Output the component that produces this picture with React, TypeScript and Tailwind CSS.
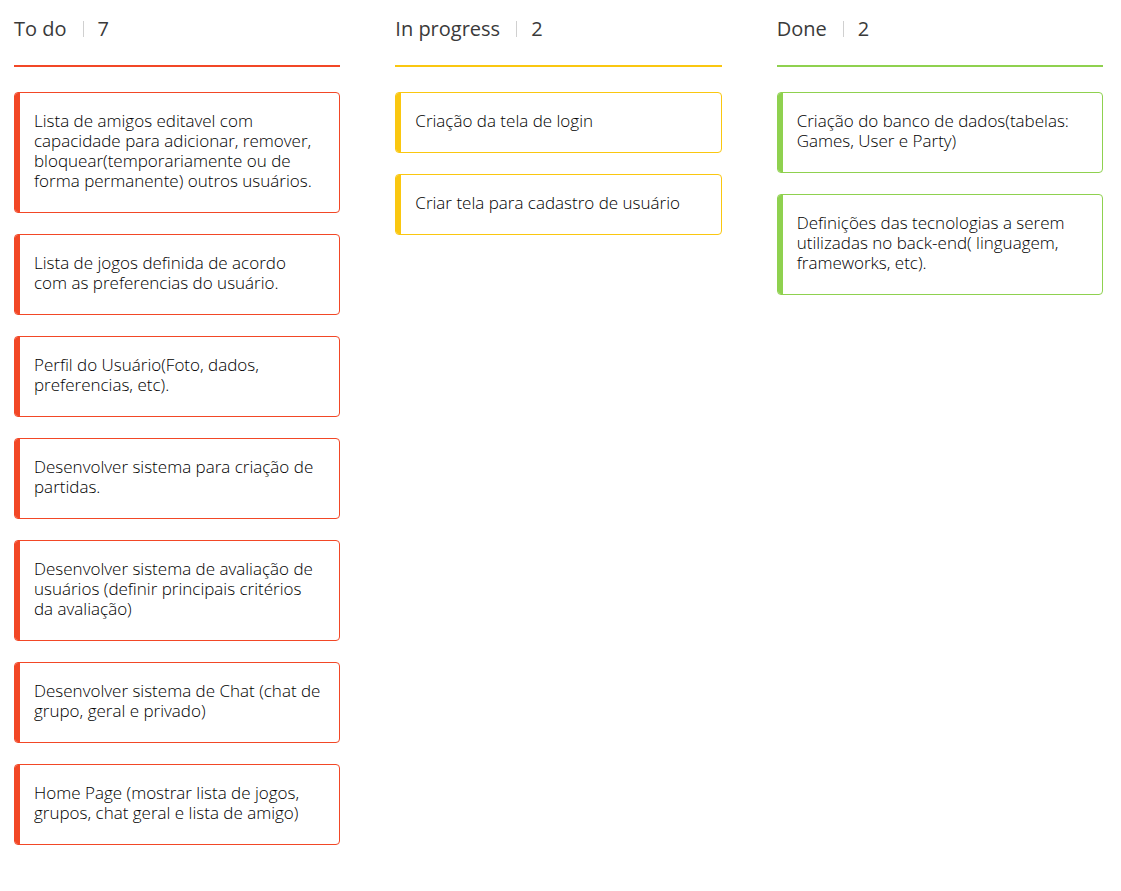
type Column = {
  title: string;
  line: string;
  card: string;
  bar: string;
  tasks: string[];
};

const columns: Column[] = [
  {
    title: "To do",
    line: "bg-[#f24726]",
    card: "border-[#f24726]",
    bar: "bg-[#f24726]",
    tasks: [
      "Lista de amigos editavel com capacidade para adicionar, remover, bloquear(temporariamente ou de forma permanente) outros usuários.",
      "Lista de jogos definida de acordo com as preferencias do usuário.",
      "Perfil do Usuário(Foto, dados, preferencias, etc).",
      "Desenvolver sistema para criação de partidas.",
      "Desenvolver sistema de avaliação de usuários (definir principais critérios da avaliação)",
      "Desenvolver sistema de Chat (chat de grupo, geral e privado)",
      "Home Page (mostrar lista de jogos, grupos, chat geral e lista de amigo)",
    ],
  },
  {
    title: "In progress",
    line: "bg-[#fac710]",
    card: "border-[#fac710]",
    bar: "bg-[#fac710]",
    tasks: ["Criação da tela de login", "Criar tela para cadastro de usuário"],
  },
  {
    title: "Done",
    line: "bg-[#8fd14f]",
    card: "border-[#8fd14f]",
    bar: "bg-[#8fd14f]",
    tasks: [
      "Criação do banco de dados(tabelas: Games, User e Party)",
      "Definições das tecnologias a serem utilizadas no back-end( linguagem, frameworks, etc).",
    ],
  },
];

export default function App() {
  return (
    <main className="grid min-h-screen grid-cols-3 content-start gap-[55px] bg-white pt-4 pr-[18px] pb-11 pl-[14px] font-['Open_Sans',sans-serif]">
      {columns.map((column) => (
        <section key={column.title}>
          <header className="flex h-[25px] items-center text-xl text-[#3a3a3a]">
            <h2>{column.title}</h2>
            <span className="mr-[14px] ml-4 h-4 w-px bg-[#d0d0d0]" />
            <span>{column.tasks.length}</span>
          </header>
          <div className={`mt-6 h-[2px] ${column.line}`} />
          <ul className="mt-[25px] flex flex-col gap-[21px]">
            {column.tasks.map((task) => (
              <li
                key={task}
                className={`flex overflow-hidden rounded-[4px] border ${column.card}`}
              >
                <span className={`w-[5px] shrink-0 ${column.bar}`} />
                <p className="pt-[18px] pr-[18px] pb-[21px] pl-[14px] text-[17px] leading-[20px] font-light text-black">
                  {task}
                </p>
              </li>
            ))}
          </ul>
        </section>
      ))}
    </main>
  );
}
